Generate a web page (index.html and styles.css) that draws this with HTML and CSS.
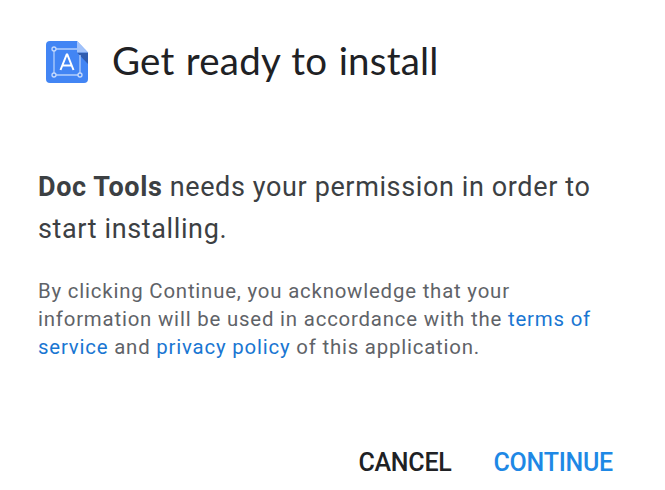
FILE: index.html
```html
<!DOCTYPE html>
<html lang="en">
<head>
  <meta charset="UTF-8" />
  <meta name="viewport" content="width=device-width, initial-scale=1.0"/>
  <title>Get ready to install</title>
  <link rel="stylesheet" href="styles.css">
</head>
<body>
  <div class="dialog">
    <div class="header">
      <svg class="logo" width="42" height="42" viewBox="0 0 42 42">
        <path d="M4 0H31L42 11.500V38a4 4 0 0 1-4 4H4a4 4 0 0 1-4-4V4a4 4 0 0 1 4-4z" fill="#4285f4"/>
        <path d="M31 11.500H42V23z" fill="#2f5cb0"/>
        <path d="M31 0L42 11.500H31z" fill="#a1c2fa"/>
        <path d="M10 8H31M8 10V32M10 34H32M34 32V14" stroke="#b3cefb" stroke-width="1.300" fill="none"/>
        <g fill="#4285f4" stroke="#c6dafc" stroke-width="1.300">
          <circle cx="8" cy="8" r="2"/>
          <circle cx="8" cy="34" r="2"/>
          <circle cx="34" cy="34" r="2"/>
        </g>
        <path d="M14.500 29L20.700 13.500H21.300L27.500 29M16.800 24.500H25.200" stroke="#fff" stroke-width="2" fill="none"/>
      </svg>
      <h1 class="title">Get ready to install</h1>
    </div>
    <p class="lead"><b>Doc Tools</b> needs your permission in order to<br>start installing.</p>
    <p class="terms">By clicking Continue, you acknowledge that your<br>information will be used in accordance with the <a class="link" href="#">terms of<br>service</a> and <a class="link" href="#">privacy policy</a> of this application.</p>
    <div class="actions">
      <button class="btn">CANCEL</button>
      <button class="btn primary">CONTINUE</button>
    </div>
  </div>
</body>
</html>
```
FILE: styles.css
```css
* {
  margin: 0;
  padding: 0;
  box-sizing: border-box;
}
body {
  background-color: #fff;
  font-family: Roboto, Arial, sans-serif;
}
.dialog {
  display: flex;
  flex-direction: column;
  height: 490px;
  padding: 37px 38px 0;
  white-space: nowrap;
  overflow: hidden;
}
.header {
  display: flex;
  align-items: center;
  height: 50px;
  padding-left: 8px;
}
.title {
  margin: -5px 0 0 24px;
  font-family: "Product Sans", Lato, sans-serif;
  font-size: 38.5px;
  font-weight: 400;
  letter-spacing: 0.2px;
  word-spacing: 1.3px;
  color: #202124;
}
.lead {
  margin-top: 79px;
  font-size: 27px;
  line-height: 42px;
  letter-spacing: 0.62px;
  color: #3c4043;
}
.terms {
  margin-top: 27px;
  font-size: 20.4px;
  line-height: 28px;
  letter-spacing: 0.8px;
  color: #5f6368;
}
.link {
  color: #1976d2;
  text-decoration: none;
}
.actions {
  display: flex;
  justify-content: flex-end;
  gap: 42px;
  margin-top: 87px;
  padding-right: 14px;
}
.btn {
  border: none;
  background: none;
  font-family: inherit;
  font-size: 25px;
  font-weight: 500;
  line-height: 30px;
  letter-spacing: -0.25px;
  color: #202124;
}
.primary {
  color: #1e88e5;
}
```
